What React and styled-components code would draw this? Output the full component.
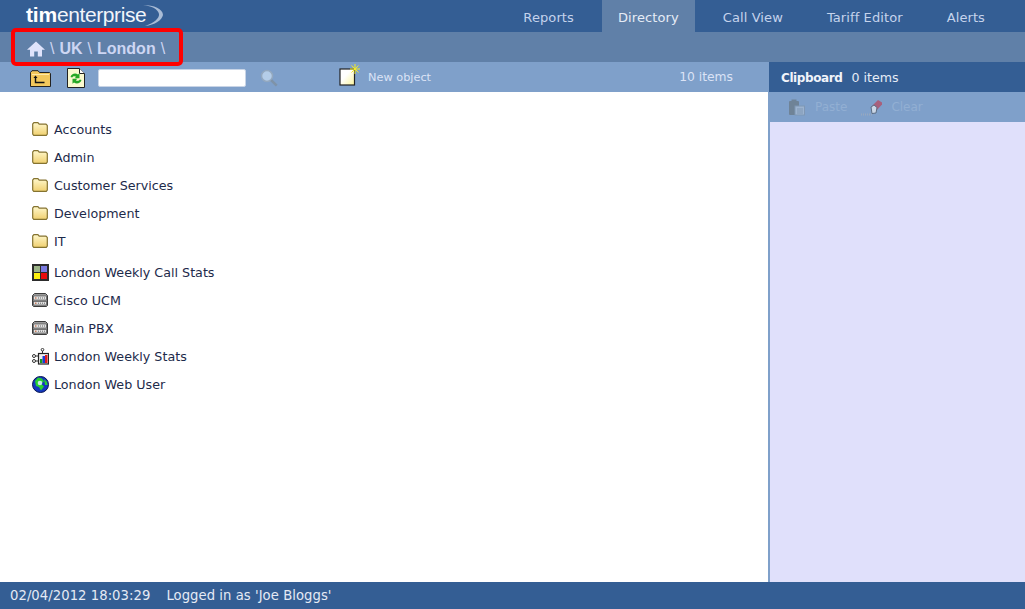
import React from "react";
import styled, { createGlobalStyle } from "styled-components";

const Global = createGlobalStyle`
  html, body { margin: 0; padding: 0; height: 100%; overflow: hidden; background: #fff; }
  #root { height: 100%; }
`;
const FONT = `"DejaVu Sans", Verdana, sans-serif`;

const Page = styled.div`
  position: relative; width: 1025px; height: 609px; display: flex; flex-direction: column;
  font-family: ${FONT}; font-size: 12px; overflow: hidden;
`;
const TopBar = styled.header`
  height: 32px; background: #345e94; display: flex; justify-content: space-between; flex: none;
`;
const Logo = styled.div`
  margin: 1px 0 0 26px; display: flex; align-items: flex-start; color: #fff;
  font-family: "Liberation Sans", Arial, sans-serif; font-size: 21px; line-height: 28px; letter-spacing: -0.4px;
  b { font-weight: 700; letter-spacing: -0.2px; }
  span { font-weight: 400; color: #f2f5fa; }
  svg { margin: 4px 0 0 -3px; }
`;
const Tabs = styled.nav`display: flex; padding-right: 24px; gap: 12px;`;
const Tab = styled.div`
  padding: 0 16px; line-height: 35px; height: 32px; font-size: 13px; letter-spacing: 0.1px;
  color: ${p => (p.$active ? "#e6ecf6" : "#c5d3ec")};
  background: ${p => (p.$active ? "#6080a8" : "transparent")};
`;
const Crumbs = styled.div`
  height: 30px; box-sizing: border-box; padding: 3px 0 0 27px; background: #6080a8; flex: none; display: flex; align-items: center; gap: 5px;
  font-family: "Liberation Sans", Arial, sans-serif; font-weight: 700; font-size: 16px; color: #cdd6f3;
`;
const Sep = styled.span`font-weight: 400;`;
const Highlight = styled.div`
  position: absolute; left: 11px; top: 28px; width: 172px; height: 38px; box-sizing: border-box;
  border: 4px solid #f00; border-radius: 5px;
`;
const Bars = styled.div`display: flex; height: 30px; flex: none;`;
const Toolbar = styled.div`
  width: 769px; background: #7fa0ca; display: flex; align-items: center; padding: 2px 0 0 30px; box-sizing: border-box;
  color: #dbe3f6; font-size: 11.3px;
`;
const RefreshSlot = styled.span`margin-left: 16px; display: flex;`;
const SearchInput = styled.input`
  width: 148px; height: 18px; box-sizing: border-box; border: 1px solid #c8d4e6; border-radius: 2px; background: #fff;
  margin: 0 14px 0 13px; padding: 0;
`;
const NewObject = styled.div`display: flex; align-items: center; gap: 7px; margin-left: 61px; position: relative; top: -3px;`;
const NewLabel = styled.span`position: relative; top: 2px;`;
const Count = styled.div`margin-left: auto; margin-right: 36px; font-size: 12.3px; position: relative; top: -1px;`;
const ClipHead = styled.div`
  flex: 1; background: #345e94; color: #e6ecf6; display: flex; align-items: center; padding: 1px 0 0 12px; gap: 9px; font-size: 12.6px;
  b { font-weight: 700; font-size: 12px; letter-spacing: -0.4px; color: #f0f3fa; }
`;
const Main = styled.main`flex: 1; display: flex; min-height: 0;`;
const List = styled.div`
  width: 768px; box-sizing: border-box; padding-top: 23px; background: #fff;
`;
const Row = styled.div`
  height: 28px; display: flex; align-items: center; padding-left: 31px; gap: 5px;
  color: #1d2a4a; font-size: 12.7px;
  margin-top: ${p => p.$gap || 0}px;
`;
const IconSlot = styled.span`width: 18px; height: 18px; display: flex; align-items: center; justify-content: center; flex: none;`;
const Side = styled.aside`
  flex: 1; border-left: 2px solid #7fa0ca; display: flex; flex-direction: column; background: #e0e0fb;
`;
const SideTools = styled.div`
  height: 30px; background: #7fa0ca; display: flex; align-items: center; padding-left: 18px; font-size: 12px; color: #92afd3;
`;
const SideTool = styled.span`display: flex; align-items: center; gap: ${p => p.$gap}px; margin-right: 14px;`;
const Footer = styled.footer`
  height: 27px; background: #345e94; color: #e4eaf5; flex: none; display: flex; align-items: center; padding-left: 10px; gap: 16px;
  font-size: 13.2px; letter-spacing: 0.05px;
`;

const Folder = () => (
  <svg width="16" height="14" viewBox="0 0 16 14">
    <defs><linearGradient id="fg" x1="0" y1="0" x2="0" y2="1"><stop offset="0" stopColor="#fff8cc"/><stop offset="1" stopColor="#f0d070"/></linearGradient></defs>
    <path d="M.7 12V2l1.200-1.300h4L7.200 2.200h6.800l1.300 1.200V12l-1 1.300H1.700z" fill="url(#fg)" stroke="#857330" strokeWidth="1.200"/>
  </svg>
);
const Grid = () => (
  <svg width="17" height="17" viewBox="0 0 17 17">
    <rect width="17" height="17" fill="#2c2c2c" />
    <rect x="2" y="2" width="6" height="6" fill="#9cb488"/><rect x="9" y="2" width="6" height="6" fill="#7a7ae0"/>
    <rect x="2" y="9" width="6" height="6" fill="#fcf010"/><rect x="9" y="9" width="6" height="6" fill="#e80c0c"/>
  </svg>
);
const Server = () => (
  <svg width="16" height="14" viewBox="0 0 16 14">
    <path d="M2.500.5h11l2 2v10l-1 1h-13l-1-1v-10z" fill="#9a9a9a" stroke="#3c3c3c"/>
    <rect x="1.500" y="3" width="13" height="4" fill="#e2e2e2" stroke="#555" strokeWidth=".7"/>
    <rect x="1.500" y="8.500" width="13" height="3.500" fill="#e2e2e2" stroke="#555" strokeWidth=".7"/>
    <path d="M3 5h1.500M3 10.200h1.500" stroke="#c05020"/><path d="M6 5h7M6 10.200h7" stroke="#666" strokeDasharray="1 1"/>
  </svg>
);
const Stats = () => (
  <svg width="17" height="17" viewBox="0 0 17 17">
    <circle cx="10.500" cy="1.700" r="1.300" fill="none" stroke="#333"/>
    <path d="M10.500 3v2" stroke="#333"/>
    <rect x="6.500" y="5.500" width="10" height="10.500" fill="#eee" stroke="#222" strokeWidth="1.200"/>
    <rect x="8" y="11" width="2.500" height="4" fill="#1a9a1a"/><rect x="10.500" y="8" width="2.500" height="7" fill="#1a3ad8"/><rect x="13" y="7" width="2.500" height="8" fill="#e01a1a"/>
    <circle cx="2" cy="8" r="1.500" fill="none" stroke="#333"/><circle cx="2" cy="13" r="1.500" fill="none" stroke="#333"/>
    <path d="M3.500 8h3M3.500 13h3" stroke="#333"/>
  </svg>
);
const Globe = () => (
  <svg width="17" height="17" viewBox="0 0 17 17">
    <circle cx="8.500" cy="8.500" r="8" fill="#1436c0" stroke="#081650"/>
    <path d="M3 5l3-3.500 4 1 2 3-3 2 3 3-3 4-2-3.500-3-1z" fill="#28d030"/>
    <path d="M12 3l3 3 .5 3-2.500 0z" fill="#28d030"/>
    <circle cx="8" cy="7" r="2.300" fill="#d8ecff" opacity=".9"/>
  </svg>
);
const Home = () => (
  <svg width="18" height="16" viewBox="0 0 18 16">
    <path d="M9 .5L0 8.800h3V15.500h4.200v-5h3.600v5H15V8.800h3z" fill="#dfe3fb"/>
  </svg>
);
const UpFolder = () => (
  <svg width="21" height="17" viewBox="0 0 21 17">
    <path d="M.5 16.500V2.500L2 .7h6L9.500 2.500h10l1 1v13z" fill="#f3c85c" stroke="#222"/>
    <path d="M2 4.500h17" stroke="#ffe9a8"/>
    <path d="M5.500 7v5.500h9" fill="none" stroke="#111" strokeWidth="1.400"/>
    <path d="M3.500 8l2-2.500 2 2.500z" fill="#111"/>
  </svg>
);
const Refresh = () => (
  <svg width="18" height="20" viewBox="0 0 18 20">
    <path d="M.5.500h12l5 5v14H.5z" fill="#fbfad0" stroke="#222"/>
    <path d="M12.500.500v5h5" fill="#fff" stroke="#222"/>
    <path d="M3.500 9c.8-3 4.500-4.500 7.500-2.500l1.500-1.300v5h-5l1.700-1.500c-1.700-1-3.200-.5-4 .8z" fill="#26a826"/>
    <path d="M14.500 12c-.8 3-4.500 4.500-7.500 2.500L5.500 15.800v-5h5l-1.700 1.500c1.700 1 3.200.5 4-.8z" fill="#26a826"/>
  </svg>
);
const Magnifier = () => (
  <svg width="18" height="18" viewBox="0 0 18 18">
    <circle cx="7" cy="7" r="5.500" fill="#b4cde8" stroke="#93a8bf" strokeWidth="1.500"/>
    <path d="M11.200 11.200l5.500 5.500" stroke="#7f93a8" strokeWidth="2.600"/>
  </svg>
);
const NewDoc = () => (
  <svg width="22" height="22" viewBox="0 0 22 22">
    <defs><linearGradient id="nd" x1="0" y1="0" x2="1" y2="1"><stop offset="0.4" stopColor="#fff"/><stop offset="1" stopColor="#fbf59a"/></linearGradient></defs>
    <rect x="1" y="5" width="14.500" height="16" fill="url(#nd)" stroke="#222" strokeWidth="1.200"/>
    <path d="M16 0v10M11 5h10M12.500 1.500l7 7M19.500 1.500l-7 7" stroke="#f6ec20" strokeWidth="1"/>
  </svg>
);
const Paste = () => (
  <svg width="17" height="17" viewBox="0 0 17 17">
    <rect x="1" y="2" width="10" height="14" rx="1" fill="#6f8397"/>
    <rect x="3.500" y="0.500" width="5" height="3" fill="#6f8397"/>
    <rect x="7" y="7" width="9.500" height="9" fill="#9cb3cf" stroke="#7f97b4"/>
    <path d="M9 10h6M9 12h6M9 14h6" stroke="#7f97b4"/>
  </svg>
);
const Eraser = () => (
  <svg width="22" height="17" viewBox="0 0 22 17">
    <path d="M0 15.500h11" stroke="#97a8bf" strokeWidth="2" strokeDasharray="1 1"/>
    <path d="M11 7l6-6 4 2.500 0 2-7 7.500-3-1z" fill="#a8607c"/>
    <path d="M10 8l3-2 3 2.500-1 5.500-4 .5z" fill="#cbd7e6" stroke="#5a6c84"/>
  </svg>
);

const folders = ["Accounts", "Admin", "Customer Services", "Development", "IT"];
const objects = [
  ["London Weekly Call Stats", Grid],
  ["Cisco UCM", Server],
  ["Main PBX", Server],
  ["London Weekly Stats", Stats],
  ["London Web User", Globe],
];
const tabs = [["Reports", false], ["Directory", true], ["Call View", false], ["Tariff Editor", false], ["Alerts", false]];

export default function App() {
  return (
    <Page>
      <Global />
      <TopBar>
        <Logo>
          <b>tim</b><span>enterprise</span>
          <svg width="20" height="22" viewBox="0 0 20 22">
            <path d="M0 0c9 1 15 4 16 9 .6 4-5 9-14 12 10-1 17-6 18-11C20 4 11 0 0 0z" fill="#a9bcd6"/>
          </svg>
        </Logo>
        <Tabs>
          {tabs.map(([t, a]) => <Tab key={t} $active={a}>{t}</Tab>)}
        </Tabs>
      </TopBar>
      <Crumbs>
        <Home /><Sep>\</Sep><span>UK</span><Sep>\</Sep><span>London</span><Sep>\</Sep>
      </Crumbs>
      <Highlight />
      <Bars>
        <Toolbar>
          <UpFolder />
          <RefreshSlot><Refresh /></RefreshSlot>
          <SearchInput aria-label="search" />
          <Magnifier />
          <NewObject><NewDoc /><NewLabel>New object</NewLabel></NewObject>
          <Count>10 items</Count>
        </Toolbar>
        <ClipHead><b>Clipboard</b><span>0 items</span></ClipHead>
      </Bars>
      <Main>
        <List>
          {folders.map(f => <Row key={f}><IconSlot><Folder /></IconSlot>{f}</Row>)}
          {objects.map(([t, I], i) => <Row key={t} $gap={i === 0 ? 3 : 0}><IconSlot><I /></IconSlot>{t}</Row>)}
        </List>
        <Side>
          <SideTools>
            <SideTool $gap={10}><Paste />Paste</SideTool>
            <SideTool $gap={8}><Eraser />Clear</SideTool>
          </SideTools>
        </Side>
      </Main>
      <Footer><span>02/04/2012 18:03:29</span><span>Logged in as 'Joe Bloggs'</span></Footer>
    </Page>
  );
}
